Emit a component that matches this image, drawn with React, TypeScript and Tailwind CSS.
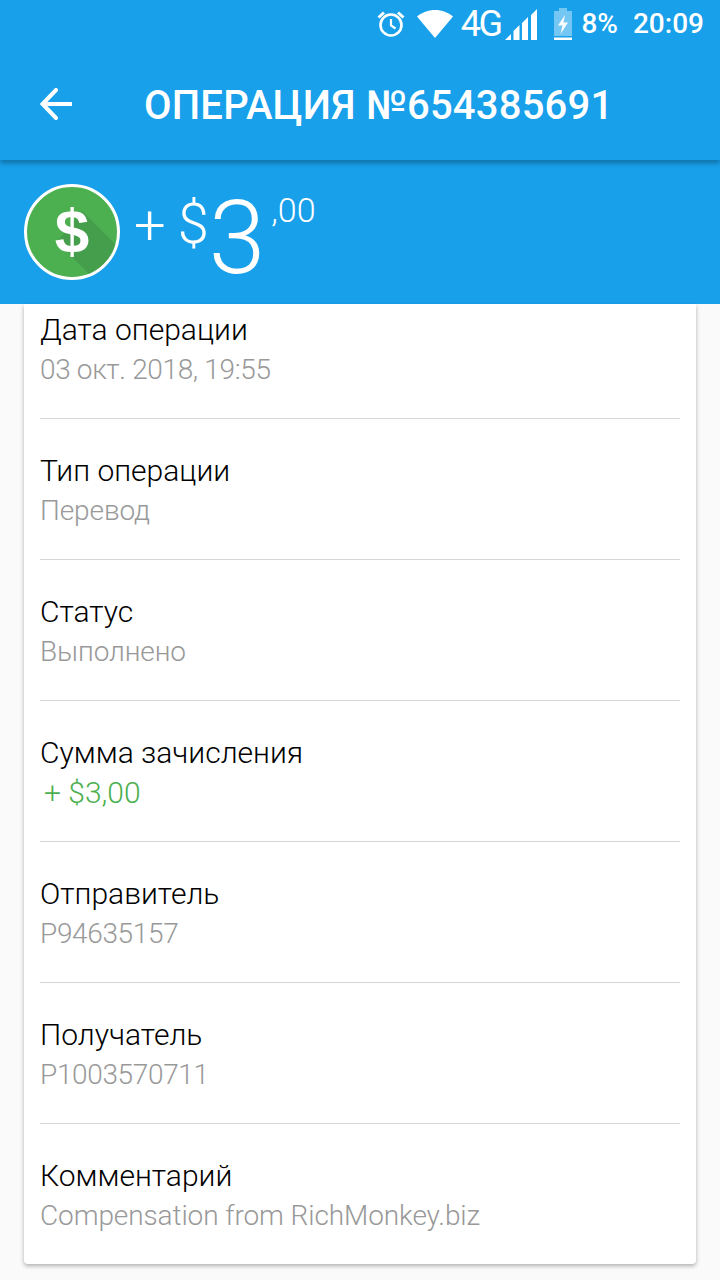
const rows = [
  { label: "Дата операции", value: "03 окт. 2018, 19:55", digits: true },
  { label: "Тип операции", value: "Перевод" },
  { label: "Статус", value: "Выполнено" },
  { label: "Сумма зачисления", value: "+ $3,00", green: true },
  { label: "Отправитель", value: "P94635157", digits: true },
  { label: "Получатель", value: "P1003570711", digits: true },
  { label: "Комментарий", value: "Compensation from RichMonkey.biz" },
];

const AlarmIcon = () => (
  <svg width="30" height="30" viewBox="0 0 30 30" fill="none" stroke="white">
    <circle cx="15" cy="16" r="10.5" strokeWidth="2.6" />
    <path d="M15 10v6.5l4.5 3" strokeWidth="2.2" />
    <path d="M2.5 8.5 8 3.5M27.5 8.5 22 3.5" strokeWidth="3" />
  </svg>
);

const WifiIcon = () => (
  <svg width="36" height="28" viewBox="0 0 36 28">
    <path d="M0 6.5C5 2.5 11 0 18 0s13 2.500 18 6.500L18 28z" fill="white" />
  </svg>
);

const SignalIcon = () => (
  <svg width="34" height="32" viewBox="0 0 34 32" fill="white">
    <path d="M0 32l6-6v6zM8.500 32V23l6-6v15zM17 32V15l6-6v23zM26 32V7l6-6v31z" />
  </svg>
);

const BatteryIcon = () => (
  <svg width="20" height="32" viewBox="0 0 20 32">
    <path d="M6 0h8v3h5v25H1V3h5z" fill="white" fillOpacity="0.4" />
    <rect x="1" y="29.500" width="18" height="2.500" fill="white" />
    <path d="M12 7 5 17.500h4.500L7.500 26 15 14.500h-4.500z" fill="white" />
  </svg>
);

const BackArrow = () => (
  <svg width="32" height="32" viewBox="0 0 32 32" fill="none" stroke="white" strokeWidth="4" strokeLinecap="round">
    <path d="M31 16H4M16 2 2.500 16 16 30" />
  </svg>
);

const DollarBadge = () => (
  <div className="flex h-[96px] w-[96px] shrink-0 items-center justify-center overflow-hidden rounded-full border-[3px] border-white bg-[#4caf50]">
    <svg width="90" height="90" viewBox="0 0 90 90">
      <path d="M55 24 90 59V90H65L30 55z" fill="#3f8f48" fillOpacity="0.55" />
      <text
        x="45"
        y="65"
        textAnchor="middle"
        fill="white"
        fontSize="62"
        fontWeight="700"
        fontFamily="Liberation Sans, sans-serif"
      >
        $
      </text>
    </svg>
  </div>
);

export default function App() {
  return (
    <div className="flex h-[1280px] w-[720px] flex-col overflow-hidden bg-[#fafafa] font-['Roboto',sans-serif]">
      <div className="relative z-10 bg-[#18a0eb] shadow-[0_3px_5px_rgba(0,0,0,0.3)]">
        <div className="flex h-[48px] items-center justify-end pr-[16px] text-white">
          <AlarmIcon />
          <div className="ml-[11px]">
            <WifiIcon />
          </div>
          <span className="ml-[8px] text-[36px] leading-none tracking-[-2.5px]">4G</span>
          <div className="ml-[5px]">
            <SignalIcon />
          </div>
          <div className="ml-[14px]">
            <BatteryIcon />
          </div>
          <span className="ml-[8px] text-[28px] font-medium leading-none">8%</span>
          <span className="ml-[15px] text-[28px] font-medium leading-none">20:09</span>
        </div>
        <div className="flex h-[112px] items-center pl-[40px]">
          <BackArrow />
          <h1 className="ml-[72px] mt-[3px] text-[40px] font-medium leading-none tracking-[0.2px] text-white">ОПЕРАЦИЯ №654385691</h1>
        </div>
      </div>

      <div className="flex h-[144px] items-center bg-[#18a0eb] pl-[24px] text-white">
        <DollarBadge />
        <div className="ml-[14px] flex h-full items-start font-light">
          <span className="mt-[33px] text-[56px] leading-[64px]">+</span>
          <span className="ml-[12px] mt-[32px] text-[56px] leading-[64px]">$</span>
          <span className="mt-[18px] text-[102px] leading-[120px]">3</span>
          <span className="ml-[6px] mt-[30px] text-[34px] leading-[40px]">,00</span>
        </div>
      </div>

      <div className="mx-[24px] flex flex-col rounded-b-[4px] bg-white px-[16px] shadow-[0_2px_4px_rgba(0,0,0,0.3)]">
        {rows.map((row, i) => (
          <div
            key={row.label}
            className={
              i === 0
                ? "pb-[28px] pt-[6px]"
                : "border-t border-[#d6d6d6] pb-[28px] pt-[32px]"
            }
          >
            <div className="text-[30px] font-light leading-[40px] text-[#000000]">{row.label}</div>
            <div
              className={
                row.green
                  ? "pl-[4px] text-[30px] font-light leading-[40px] text-[#4caf50]"
                  : row.digits
                    ? "text-[28px] font-light leading-[40px] tracking-[-0.35px] text-[#999999]"
                    : "text-[28px] font-light leading-[40px] tracking-[-0.1px] text-[#999999]"
              }
            >
              {row.value}
            </div>
          </div>
        ))}
      </div>
    </div>
  );
}
